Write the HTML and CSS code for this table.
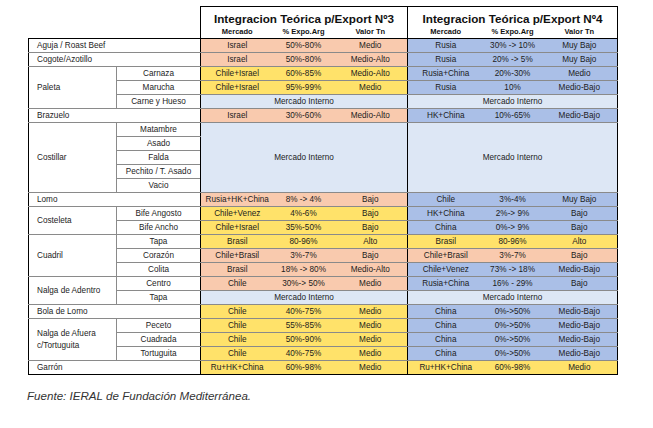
FILE: index.html
```html
<!DOCTYPE html>
<html lang="es">
<head>
<meta charset="utf-8">
<title>Integracion Teórica p/Export</title>
<link rel="stylesheet" href="styles.css">
</head>
<body>
<div class="wrap">
<table class="grid">
  <colgroup>
    <col class="c-cut"><col class="c-sub">
    <col class="c-m3"><col class="c-p3"><col class="c-v3">
    <col class="c-m4"><col class="c-p4"><col class="c-v4">
  </colgroup>
  <thead>
    <tr class="title-row">
      <th colspan="2" class="blank"></th>
      <th colspan="3" class="title s3">Integracion Teórica p/Export Nº3</th>
      <th colspan="3" class="title s4">Integracion Teórica p/Export Nº4</th>
    </tr>
    <tr class="sub-row">
      <th colspan="2" class="blank"></th>
      <th class="sh s3">Mercado</th><th class="sh">% Expo.Arg</th><th class="sh">Valor Tn</th>
      <th class="sh s4">Mercado</th><th class="sh">% Expo.Arg</th><th class="sh end">Valor Tn</th>
    </tr>
  </thead>
  <tbody>
    <tr class="first">
      <td colspan="2" class="cut">Aguja / Roast Beef</td>
      <td class="s3 sal">Israel</td><td class="sal">50%-80%</td><td class="sal">Medio</td>
      <td class="s4 blu">Rusia</td><td class="blu">30% -&gt; 10%</td><td class="blu end">Muy Bajo</td>
    </tr>
    <tr>
      <td colspan="2" class="cut">Cogote/Azotillo</td>
      <td class="s3 sal">Israel</td><td class="sal">50%-80%</td><td class="sal">Medio-Alto</td>
      <td class="s4 blu">Rusia</td><td class="blu">20% -&gt; 5%</td><td class="blu end">Muy Bajo</td>
    </tr>
    <tr>
      <td rowspan="3" class="cut grp">Paleta</td><td class="sub">Carnaza</td>
      <td class="s3 yel">Chile+Israel</td><td class="yel">60%-85%</td><td class="yel">Medio-Alto</td>
      <td class="s4 blu">Rusia+China</td><td class="blu">20%-30%</td><td class="blu end">Medio</td>
    </tr>
    <tr>
      <td class="sub">Marucha</td>
      <td class="s3 yel">Chile+Israel</td><td class="yel">95%-99%</td><td class="yel">Medio</td>
      <td class="s4 blu">Rusia</td><td class="blu">10%</td><td class="blu end">Medio-Bajo</td>
    </tr>
    <tr>
      <td class="sub">Carne y Hueso</td>
      <td colspan="3" class="s3 int">Mercado Interno</td>
      <td colspan="3" class="s4 int end">Mercado Interno</td>
    </tr>
    <tr>
      <td colspan="2" class="cut">Brazuelo</td>
      <td class="s3 sal">Israel</td><td class="sal">30%-60%</td><td class="sal">Medio-Alto</td>
      <td class="s4 blu">HK+China</td><td class="blu">10%-65%</td><td class="blu end">Medio-Bajo</td>
    </tr>
    <tr>
      <td rowspan="5" class="cut grp">Costillar</td><td class="sub">Matambre</td>
      <td colspan="3" rowspan="5" class="s3 int">Mercado Interno</td>
      <td colspan="3" rowspan="5" class="s4 int end">Mercado Interno</td>
    </tr>
    <tr><td class="sub">Asado</td></tr>
    <tr><td class="sub">Falda</td></tr>
    <tr><td class="sub">Pechito / T. Asado</td></tr>
    <tr><td class="sub">Vacio</td></tr>
    <tr>
      <td colspan="2" class="cut">Lomo</td>
      <td class="s3 sal">Rusia+HK+China</td><td class="sal">8% -&gt; 4%</td><td class="sal">Bajo</td>
      <td class="s4 blu">Chile</td><td class="blu">3%-4%</td><td class="blu end">Muy Bajo</td>
    </tr>
    <tr>
      <td rowspan="2" class="cut grp">Costeleta</td><td class="sub">Bife Angosto</td>
      <td class="s3 yel">Chile+Venez</td><td class="yel">4%-6%</td><td class="yel">Bajo</td>
      <td class="s4 blu">HK+China</td><td class="blu">2%-&gt; 9%</td><td class="blu end">Bajo</td>
    </tr>
    <tr>
      <td class="sub">Bife Ancho</td>
      <td class="s3 yel">Chile+Israel</td><td class="yel">35%-50%</td><td class="yel">Bajo</td>
      <td class="s4 blu">China</td><td class="blu">0%-&gt; 9%</td><td class="blu end">Bajo</td>
    </tr>
    <tr>
      <td rowspan="3" class="cut grp">Cuadril</td><td class="sub">Tapa</td>
      <td class="s3 yel">Brasil</td><td class="yel">80-96%</td><td class="yel">Alto</td>
      <td class="s4 yel">Brasil</td><td class="yel">80-96%</td><td class="yel end">Alto</td>
    </tr>
    <tr>
      <td class="sub">Corazón</td>
      <td class="s3 sal">Chile+Brasil</td><td class="sal">3%-7%</td><td class="sal">Bajo</td>
      <td class="s4 sal">Chile+Brasil</td><td class="sal">3%-7%</td><td class="sal end">Bajo</td>
    </tr>
    <tr>
      <td class="sub">Colita</td>
      <td class="s3 sal">Brasil</td><td class="sal">18% -&gt; 80%</td><td class="sal">Medio-Alto</td>
      <td class="s4 blu">Chile+Venez</td><td class="blu">73% -&gt; 18%</td><td class="blu end">Medio-Bajo</td>
    </tr>
    <tr>
      <td rowspan="2" class="cut grp">Nalga de Adentro</td><td class="sub">Centro</td>
      <td class="s3 sal">Chile</td><td class="sal">30%-&gt; 50%</td><td class="sal">Medio</td>
      <td class="s4 blu">Rusia+China</td><td class="blu">16% - 29%</td><td class="blu end">Bajo</td>
    </tr>
    <tr>
      <td class="sub">Tapa</td>
      <td colspan="3" class="s3 int">Mercado Interno</td>
      <td colspan="3" class="s4 int end">Mercado Interno</td>
    </tr>
    <tr>
      <td colspan="2" class="cut">Bola de Lomo</td>
      <td class="s3 yel">Chile</td><td class="yel">40%-75%</td><td class="yel">Medio</td>
      <td class="s4 blu">China</td><td class="blu">0%-&gt;50%</td><td class="blu end">Medio-Bajo</td>
    </tr>
    <tr>
      <td rowspan="3" class="cut grp">Nalga de Afuera<br>c/Tortuguita</td><td class="sub">Peceto</td>
      <td class="s3 yel">Chile</td><td class="yel">55%-85%</td><td class="yel">Medio</td>
      <td class="s4 blu">China</td><td class="blu">0%-&gt;50%</td><td class="blu end">Medio-Bajo</td>
    </tr>
    <tr>
      <td class="sub">Cuadrada</td>
      <td class="s3 yel">Chile</td><td class="yel">50%-90%</td><td class="yel">Medio</td>
      <td class="s4 blu">China</td><td class="blu">0%-&gt;50%</td><td class="blu end">Medio-Bajo</td>
    </tr>
    <tr>
      <td class="sub">Tortuguita</td>
      <td class="s3 yel">Chile</td><td class="yel">40%-75%</td><td class="yel">Medio</td>
      <td class="s4 blu">China</td><td class="blu">0%-&gt;50%</td><td class="blu end">Medio-Bajo</td>
    </tr>
    <tr class="last">
      <td colspan="2" class="cut">Garrón</td>
      <td class="s3 yel">Ru+HK+China</td><td class="yel">60%-98%</td><td class="yel">Medio</td>
      <td class="s4 yel">Ru+HK+China</td><td class="yel">60%-98%</td><td class="yel end">Medio</td>
    </tr>
  </tbody>
</table>
<p class="source">Fuente: IERAL de Fundación Mediterránea.</p>
</div>
</body>
</html>
```

FILE: styles.css
```css
html, body {
  margin: 0;
  padding: 0;
  background: #ffffff;
}

.wrap {
  padding: 6px 0 0 28px;
}

.grid {
  border-collapse: collapse;
  table-layout: fixed;
  width: 589px;
  font-family: "Liberation Sans", Arial, sans-serif;
  font-size: 8.2px;
  color: #1c1c1c;
}

.c-cut { width: 88px; }
.c-sub { width: 84px; }
.c-m3 { width: 73px; }
.c-p3 { width: 60px; }
.c-v3 { width: 74px; }
.c-m4 { width: 76px; }
.c-p4 { width: 58px; }
.c-v4 { width: 76px; }

.grid th, .grid td {
  padding: 0;
  text-align: center;
  vertical-align: middle;
  white-space: nowrap;
  overflow: hidden;
}

.title-row th { height: 19px; }
.sub-row th { height: 12px; }

.grid .blank { border: none; }

.grid .title {
  font-size: 11.7px;
  font-weight: bold;
  color: #111;
  border-top: 1px solid #000;
  vertical-align: bottom;
  line-height: 15px;
}
.grid .title.s4 { border-right: 1px solid #000; }

.grid .sh {
  font-size: 7.5px;
  font-weight: bold;
  color: #111;
  line-height: 10px;
}

.grid .s3 { border-left: 1px solid #000; }
.grid .s4 { border-left: 1px solid #000; }
.grid .end { border-right: 1px solid #000; }

.grid tbody td {
  height: 13px;
  line-height: 12px;
  border-bottom: 1px solid #8a8a8a;
}

.grid tbody tr.first td { border-top: 1px solid #000; }
.grid tbody tr.last td { border-bottom: 1px solid #000; }

.grid td.cut {
  text-align: left;
  padding-left: 8px;
  border-left: 1px solid #000;
}
.grid td.grp { border-right: 1px solid #8a8a8a; }
.grid td.sub { background: #fff; }

.grid .sal { background: #f9caae; }
.grid .yel { background: #ffe26a; }
.grid .blu { background: #aabfe7; }
.grid .int { background: #dde7f5; }

.source {
  margin: 14px 0 0 -1px;
  font-family: "Liberation Sans", Arial, sans-serif;
  font-style: italic;
  font-size: 11.6px;
  line-height: 14px;
  color: #333;
}
```
